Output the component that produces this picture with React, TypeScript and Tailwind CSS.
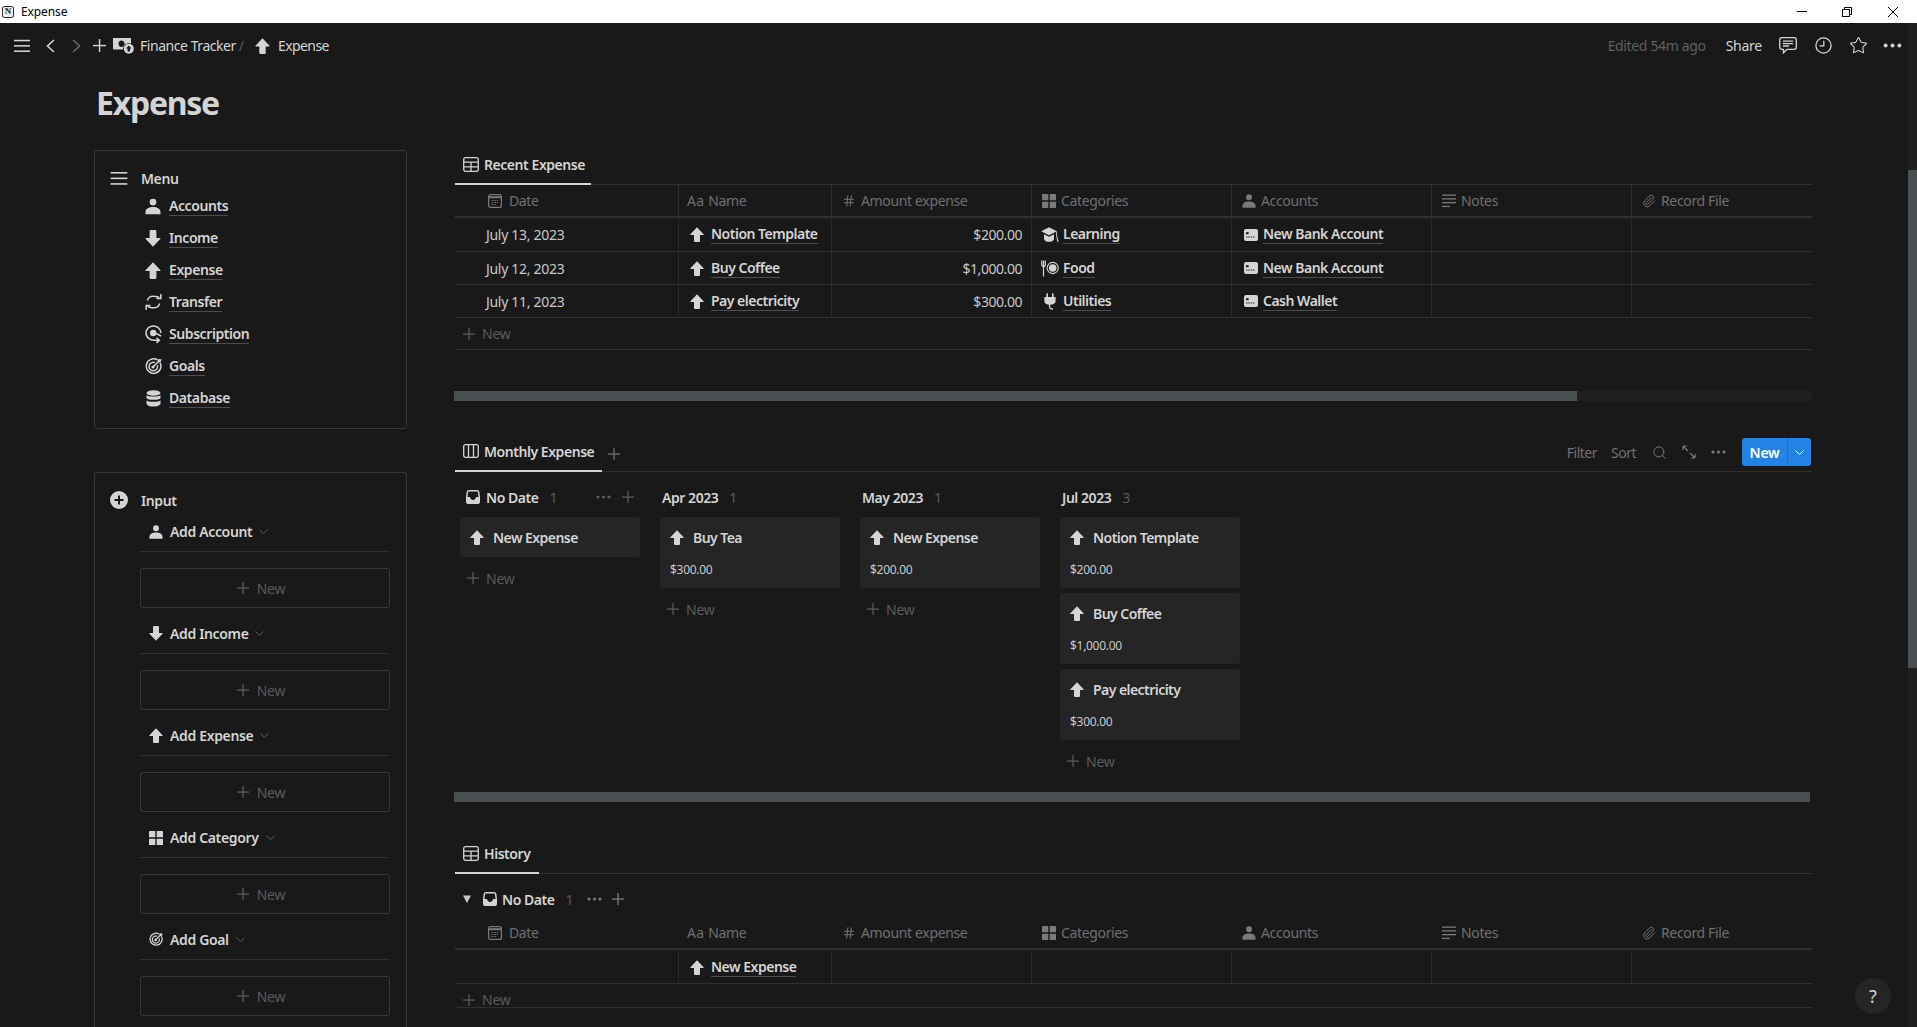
import React from "react";
import { Search, Hash, Paperclip, Star } from "lucide-react";

type P = { className?: string };

const Up = ({ className = "w-[14px] h-[15px] text-[#d4d4d4]" }: P) => (
  <svg viewBox="0 0 14 15" className={className} fill="currentColor"><path d="M7 0.3 L13.6 7.2 Q14 7.9 13.2 8 L10 8 L10 14 Q10 15 9 15 L5 15 Q4 15 4 14 L4 8 L0.8 8 Q0 7.9 0.4 7.2 Z" /></svg>
);
const Down = ({ className = "w-[14px] h-[15px] text-[#d4d4d4]" }: P) => (
  <svg viewBox="0 0 14 15" className={className} fill="currentColor"><path d="M7 14.7 L13.6 7.8 Q14 7.1 13.2 7 L10 7 L10 1 Q10 0 9 0 L5 0 Q4 0 4 1 L4 7 L0.8 7 Q0 7.1 0.4 7.8 Z" /></svg>
);
const Burger = ({ className = "w-[18px] h-[14px] text-[#d4d4d4]" }: P) => (
  <svg viewBox="0 0 18 14" className={className} fill="currentColor"><rect y="0" width="18" height="1.7" /><rect y="6" width="18" height="1.7" /><rect y="12" width="18" height="1.7" /></svg>
);
const Person = ({ className = "w-[16px] h-[16px] text-[#d4d4d4]" }: P) => (
  <svg viewBox="0 0 16 16" className={className} fill="currentColor"><circle cx="8" cy="3.6" r="3.4" /><path d="M0.5 15.8 V13.5 C0.5 10.3 4 8.6 8 8.6 C12 8.6 15.5 10.3 15.5 13.5 V15.8 Z" /></svg>
);
const Transfer = ({ className = "w-[17px] h-[16px] text-[#d4d4d4]" }: P) => (
  <svg viewBox="0 0 17 16" className={className} fill="none" stroke="currentColor" strokeWidth="1.6"><path d="M2.5 6.5 C3 3.5 6 2 8.5 2.2 C10.5 2.3 12 2.8 14 3.2" /><path d="M15.8 0.2 L15.8 4.4 L11.6 4.4" /><path d="M14.5 9.5 C14 12.5 11 14 8.5 13.8 C6.5 13.7 5 13.2 3 12.8" /><path d="M1.2 15.8 L1.2 11.6 L5.4 11.6" /></svg>
);
const Subscription = ({ className = "w-[17px] h-[19px] text-[#d4d4d4]" }: P) => (
  <svg viewBox="0 0 17 19" className={className} fill="none" stroke="currentColor" strokeWidth="1.6"><path d="M9 15.2 C4.6 15.2 1 12 1 8 C1 4 4.3 1 8.4 1 C12.4 1 15.8 4 15.8 8" /><path d="M9 15.2 L14 15.2 M11.5 12.8 L14.2 15.2 L11.5 17.8" /><circle cx="8.2" cy="8" r="3.2" fill="currentColor" stroke="none" /><path d="M11 8.4 L16 11" /></svg>
);
const Target = ({ className = "w-[17px] h-[17px] text-[#d4d4d4]" }: P) => (
  <svg viewBox="0 0 17 17" className={className} fill="none" stroke="currentColor" strokeWidth="1.5"><path d="M12.6 2 A7.3 7.3 0 1 0 15 4.6" /><path d="M10 4.6 A4.3 4.3 0 1 0 12.4 7.2" /><circle cx="8" cy="9" r="1.6" fill="currentColor" stroke="none" /><path d="M8 9 L14 3" /><path d="M12.8 1.6 L12.8 4.2 L15.6 4.2 L16.6 1.6 L14.6 1 Z" fill="currentColor" stroke="none" /></svg>
);
const Database = ({ className = "w-[15px] h-[17px] text-[#d4d4d4]" }: P) => (
  <svg viewBox="0 0 15 17" className={className} fill="currentColor"><ellipse cx="7.5" cy="3" rx="7" ry="2.8" /><path d="M0.5 5 C2 7 13 7 14.5 5 V8.2 C13 10.4 2 10.4 0.5 8.2 Z" /><path d="M0.5 10.2 C2 12.2 13 12.2 14.5 10.2 V14 C13 17.4 2 17.4 0.5 14 Z" /></svg>
);
const TableIcon = ({ className = "w-[16px] h-[15px] text-[#d4d4d4]" }: P) => (
  <svg viewBox="0 0 16 15" className={className} fill="none" stroke="currentColor" strokeWidth="1.3"><rect x="0.7" y="0.7" width="14.6" height="13.6" rx="2" /><path d="M0.7 5.2 H15.3 M0.7 9.8 H15.3 M8 5.2 V14.3" /></svg>
);
const BoardIcon = ({ className = "w-[16px] h-[14px] text-[#d4d4d4]" }: P) => (
  <svg viewBox="0 0 16 14" className={className} fill="none" stroke="currentColor" strokeWidth="1.3"><rect x="0.7" y="0.7" width="14.6" height="12.6" rx="1.8" /><path d="M5.5 0.7 V13.3 M10.5 0.7 V13.3" /></svg>
);
const Cal = ({ className = "w-[14px] h-[14px] text-[#7a7a7a]" }: P) => (
  <svg viewBox="0 0 14 14" className={className} fill="none" stroke="currentColor"><rect x="0.6" y="0.6" width="12.8" height="12.8" rx="2" strokeWidth="1.2" /><path d="M1 3.2 H13" strokeWidth="2" /><path d="M3.5 6.5 H10.5 M3.5 8.5 H10.5 M3.5 10.5 H8" strokeWidth="1.1" strokeDasharray="1 0.8" /></svg>
);
const Grid = ({ className = "w-[14px] h-[14px] text-[#7a7a7a]" }: P) => (
  <svg viewBox="0 0 14 14" className={className} fill="currentColor"><rect width="6.3" height="6.3" rx="0.6" /><rect x="7.7" width="6.3" height="6.3" rx="0.6" /><rect y="7.7" width="6.3" height="6.3" rx="0.6" /><rect x="7.7" y="7.7" width="6.3" height="6.3" rx="0.6" /></svg>
);
const Notes = ({ className = "w-[14px] h-[14px] text-[#7a7a7a]" }: P) => (
  <svg viewBox="0 0 14 14" className={className} fill="currentColor"><rect y="0.5" width="14" height="1.3" /><rect y="4.2" width="14" height="1.3" /><rect y="8" width="14" height="1.3" /><rect y="11.8" width="8" height="1.3" /></svg>
);
const Grad = ({ className = "w-[18px] h-[16px] text-[#d4d4d4]" }: P) => (
  <svg viewBox="0 0 18 16" className={className} fill="currentColor"><path d="M8 0.3 L16 4.3 L8 8.3 L0.2 4.3 Z" /><path d="M3 7.2 L8 9.8 L13 7.2 V12 C12 15.8 4 15.8 3 12 Z" /><path d="M15.2 5 L16.1 4.6 V9 L17.6 14.5 L16.4 15 L15.2 9 Z" /></svg>
);
const Food = ({ className = "w-[18px] h-[17px] text-[#d4d4d4]" }: P) => (
  <svg viewBox="0 0 18 17" className={className} fill="none" stroke="currentColor"><path d="M0.7 0.5 V4.5 C0.7 6 2 6.5 2.5 6.5 C3 6.5 4.3 6 4.3 4.5 V0.5 M2.5 0.5 V16.5" strokeWidth="1.2" /><circle cx="11.7" cy="8" r="5.6" strokeWidth="1.1" /><circle cx="11.7" cy="8" r="3.8" fill="currentColor" stroke="none" /></svg>
);
const Plug = ({ className = "w-[12px] h-[17px] text-[#d4d4d4]" }: P) => (
  <svg viewBox="0 0 12 17" className={className}><path fill="currentColor" d="M2.4 0.3 H4 V4 H8 V0.3 H9.6 V4 H11.6 V8 C11.6 10.5 9.6 11.8 6 11.8 C2.4 11.8 0.4 10.5 0.4 8 V4 H2.4 Z" /><path fill="none" stroke="currentColor" strokeWidth="1.3" d="M5.5 11 V13.5 C5.5 15.5 7 16 9 16" /></svg>
);
const Card = ({ className = "w-[14px] h-[12px] text-[#d4d4d4]" }: P) => (
  <svg viewBox="0 0 14 12" className={className}><rect width="14" height="12" rx="2" fill="currentColor" /><rect x="2" y="3.2" width="2.6" height="2" fill="#191919" /><path d="M2 8 H11" stroke="#191919" strokeWidth="1.2" strokeDasharray="1.4 1" /></svg>
);
const Inbox = ({ className = "w-[14px] h-[14px] text-[#d4d4d4]" }: P) => (
  <svg viewBox="0 0 14 14" className={className}><path fill="currentColor" d="M3 0 H11 Q13 0 13.4 2 L14 7 V12 Q14 14 12 14 H2 Q0 14 0 12 V7 L0.6 2 Q1 0 3 0 Z M3 1.4 Q2.2 1.4 2 2.2 L1.5 7 H4 C4.4 9.2 5.6 10 7 10 C8.4 10 9.6 9.2 10 7 H12.5 L12 2.2 Q11.8 1.4 11 1.4 Z" /></svg>
);
const Dots = ({ className = "w-[15px] h-[4px] text-[#7a7a7a]" }: P) => (
  <svg viewBox="0 0 15 4" className={className} fill="currentColor"><circle cx="2" cy="2" r="1.6" /><circle cx="7.5" cy="2" r="1.6" /><circle cx="13" cy="2" r="1.6" /></svg>
);
const Plus = ({ className = "w-[12px] h-[12px] text-[#5a5a5a]" }: P) => (
  <svg viewBox="0 0 12 12" className={className} fill="currentColor"><rect x="5.4" width="1.3" height="12" /><rect y="5.4" width="12" height="1.3" /></svg>
);
const Chev = ({ className = "w-[9px] h-[5px] text-[#5a5a5a]" }: P) => (
  <svg viewBox="0 0 9 5" className={className} fill="none" stroke="currentColor" strokeWidth="1"><path d="M0.5 0.5 L4.5 4.5 L8.5 0.5" /></svg>
);
const Expand = ({ className = "w-[14px] h-[14px] text-[#7a7a7a]" }: P) => (
  <svg viewBox="0 0 14 14" className={className} fill="none" stroke="currentColor" strokeWidth="1.2"><path d="M1 1 L6 6 M1 1 H5 M1 1 V5" /><path d="M13 13 L8 8 M13 13 H9 M13 13 V9" /></svg>
);
const Money = () => (
  <svg viewBox="0 0 21 16" className="w-[21px] h-[16px] text-[#d4d4d4]">
    <path fill="currentColor" fillRule="evenodd" d="M0 0 H18 V5.5 A6 6 0 0 0 10 11.5 H0 Z M8.5 2.5 A3.2 3.2 0 0 0 5.5 5.8 A3.2 3.2 0 0 0 8.5 9 A3 3 0 0 0 11 7.5 A3.2 3.2 0 0 0 8.5 2.5 Z" />
    <circle cx="15.8" cy="10.8" r="5" fill="currentColor" />
    <path fill="#191919" d="M15.8 7.5 L18.6 10.5 H17 V13.5 H14.6 V10.5 H13 Z" />
  </svg>
);

const font = "font-['Noto_Sans','Open_Sans',sans-serif]";

const Linked = ({ children, tight = "tracking-[-0.5px]" }: { children: React.ReactNode; tight?: string }) => (
  <span className={`border-b border-[#4d4d4d] font-semibold text-[#d4d4d4] text-[14px] leading-[18px] ${tight}`}>{children}</span>
);

const menuArrow = "w-[16px] h-[17px] text-[#d4d4d4]";

const items: [React.ReactNode, string][] = [
  [<Person className={menuArrow} />, "Accounts"],
  [<Down className={menuArrow} />, "Income"],
  [<Up className={menuArrow} />, "Expense"],
  [<Transfer />, "Transfer"],
  [<Subscription />, "Subscription"],
  [<Target />, "Goals"],
  [<Database />, "Database"],
];

const MenuBox = () => (
  <div className="border border-[#373737] rounded-[3px] pt-[15px] pb-[14px] pl-[15px]">
    <div className="flex items-center h-[24px]">
      <Burger className="w-[18px] h-[13px] text-[#d4d4d4]" />
      <span className="ml-[13px] text-[14px] font-semibold text-[#d4d4d4] tracking-[-0.4px]">Menu</span>
    </div>
    {items.map(([icon, label]) => (
      <div key={label} className="flex items-center h-[32px] pl-[34px]">
        <span className="w-[18px] flex justify-center">{icon}</span>
        <span className="ml-[7px] flex"><Linked tight="tracking-[-0.42px]">{label}</Linked></span>
      </div>
    ))}
  </div>
);

const addRows: [React.ReactNode, string][] = [
  [<Person className="w-[14px] h-[14px] text-[#d4d4d4]" />, "Add Account"],
  [<Down />, "Add Income"],
  [<Up />, "Add Expense"],
  [<Grid className="w-[14px] h-[14px] text-[#d4d4d4]" />, "Add Category"],
  [<Target className="w-[15px] h-[15px] text-[#d4d4d4]" />, "Add Goal"],
];

const InputBox = () => (
  <div className="border-x border-t border-[#373737] rounded-t-[3px] pt-[15px] pl-[15px] h-[600px] mt-[43px]">
    <div className="flex items-center h-[24px]">
      <svg viewBox="0 0 18 18" className="w-[18px] h-[18px] text-[#d4d4d4]">
        <circle cx="9" cy="9" r="9" fill="currentColor" />
        <path d="M9 4.5 V13.5 M4.5 9 H13.5" stroke="#191919" strokeWidth="2" />
      </svg>
      <span className="ml-[13px] text-[14px] font-semibold text-[#d4d4d4] tracking-[-0.4px]">Input</span>
    </div>
    <div className="ml-[30px] w-[250px] flex flex-col">
      {addRows.map(([icon, label]) => (
        <div key={label} className="h-[102px]">
          <div className="h-[40px] border-b border-[#2f2f2f] flex items-center pl-[9px]">
            <span className="w-[14px] flex justify-center">{icon}</span>
            <span className="ml-[7px] text-[14px] font-semibold text-[#d4d4d4] tracking-[-0.35px]">{label}</span>
            <Chev className="ml-[7px] w-[9px] h-[5px] text-[#5a5a5a]" />
          </div>
          <div className="mt-[16px] h-[40px] border border-[#373737] rounded-[3px] flex items-center justify-center pr-[8px]">
            <Plus />
            <span className="ml-[8px] text-[14px] text-[#5a5a5a] tracking-[-0.2px]">New</span>
          </div>
        </div>
      ))}
    </div>
  </div>
);

const Tab = ({ icon, label, w, gap = "ml-[5px]" }: { icon: React.ReactNode; label: string; w: string; gap?: string }) => (
  <div className={`${w} h-[35px] -mb-px border-b-2 border-[#d4d4d4] flex items-center pl-[8px] pb-[5px]`}>
    {icon}
    <span className={`${gap} text-[14px] font-semibold text-[#d4d4d4] tracking-[-0.45px]`}>{label}</span>
  </div>
);

const cols = "grid grid-cols-[224px_153px_200px_200px_200px_200px_180px]";
const colLine = "border-r border-[#2a2a2a]";

const HeadCell = ({ icon, label, pl, gap, line = true }: { icon: React.ReactNode; label: string; pl: string; gap: string; line?: boolean }) => (
  <div className={`flex items-center ${pl} ${line ? "border-r border-[#2f2f2f]" : ""}`}>
    {icon}
    <span className={`${gap} text-[14px] text-[#6f6f6f] tracking-[-0.35px]`}>{label}</span>
  </div>
);

const Header = ({ line = true, h = "h-[33px]" }: { line?: boolean; h?: string }) => (
  <div className={`${cols} ${h} border-b-2 border-[#2f2f2f]`}>
    <HeadCell icon={<Cal />} label="Date" pl="pl-[33px]" gap="ml-[7px]" line={line} />
    <HeadCell icon={<span className="text-[14px] text-[#6f6f6f] tracking-[0.2px]">Aa</span>} label="Name" pl="pl-[8px]" gap="ml-[4px]" line={line} />
    <HeadCell icon={<Hash className="w-[14px] h-[14px] text-[#7a7a7a]" strokeWidth={1.6} />} label="Amount expense" pl="pl-[10px]" gap="ml-[5px]" line={line} />
    <HeadCell icon={<Grid />} label="Categories" pl="pl-[10px]" gap="ml-[5px]" line={line} />
    <HeadCell icon={<Person className="w-[14px] h-[14px] text-[#7a7a7a]" />} label="Accounts" pl="pl-[10px]" gap="ml-[5px]" line={line} />
    <HeadCell icon={<Notes />} label="Notes" pl="pl-[10px]" gap="ml-[5px]" line={line} />
    <HeadCell icon={<Paperclip className="w-[14px] h-[14px] text-[#7a7a7a]" strokeWidth={1.6} />} label="Record File" pl="pl-[10px]" gap="ml-[5px]" line={false} />
  </div>
);

const Row = ({ date, name, amount, catIcon, cat, account, h }: { date?: string; name: string; amount?: string; catIcon?: React.ReactNode; cat?: string; account?: string; h: string }) => (
  <div className={`${cols} ${h} border-b border-[#2f2f2f]`}>
    <div className={`${colLine} flex items-center pl-[31px] text-[14px] text-[#c8c8c8] tracking-[-0.3px]`}>{date}</div>
    <div className={`${colLine} flex items-center pl-[11px]`}><Up /><span className="ml-[7px] flex"><Linked>{name}</Linked></span></div>
    <div className={`${colLine} flex items-center justify-end pr-[9px] text-[14px] text-[#c8c8c8] tracking-[-0.45px]`}>{amount}</div>
    <div className={`${colLine} flex items-center pl-[9px]`}>
      {cat && <span className="w-[18px] flex justify-center">{catIcon}</span>}
      {cat && <span className="ml-[4px] flex"><Linked>{cat}</Linked></span>}
    </div>
    <div className={`${colLine} flex items-center pl-[12px]`}>
      {account && <Card />}
      {account && <span className="ml-[5px] flex"><Linked>{account}</Linked></span>}
    </div>
    <div className={colLine} />
    <div />
  </div>
);

const NewRow = ({ className = "" }: P) => (
  <div className={`flex items-center ${className}`}>
    <Plus />
    <span className="ml-[7px] text-[14px] text-[#5a5a5a] tracking-[-0.2px]">New</span>
  </div>
);

const BoardCard = ({ name, price }: { name: string; price?: string }) => (
  <div className={`w-[180px] ${price ? "h-[71px]" : "h-[40px]"} bg-[#252525] rounded-[3px] pl-[10px]`}>
    <div className="flex items-center h-[41px] -mb-[1px]">
      <Up />
      <span className="ml-[9px] text-[14px] font-semibold text-[#d4d4d4] tracking-[-0.55px]">{name}</span>
    </div>
    {price && <div className="h-[22px] mt-[2px] flex items-center text-[12px] text-[#c8c8c8] tracking-[-0.3px]">{price}</div>}
  </div>
);

const ColHead = ({ children, count, trailing }: { children: React.ReactNode; count: string; trailing?: React.ReactNode }) => (
  <div className="h-[26px] mt-[12px] mb-[7px] flex items-center text-[14px] font-semibold text-[#d4d4d4] tracking-[-0.45px]">
    {children}
    <span className="ml-[11px] text-[#5a5a5a] font-normal">{count}</span>
    {trailing}
  </div>
);

const BoardCol = ({ head, cards, indent = "pl-[2px]" }: { head: React.ReactNode; cards: { name: string; price?: string }[]; indent?: string }) => (
  <div className="w-[180px]">
    <div className={indent}>{head}</div>
    <div className="flex flex-col gap-[5px]">
      {cards.map((c) => <BoardCard key={c.name} {...c} />)}
    </div>
    <NewRow className="h-[42px] pl-[7px]" />
  </div>
);

const App = () => (
  <div className={`w-[1917px] h-[1027px] overflow-hidden bg-[#191919] flex flex-col ${font}`}>
    <div className="h-[23px] bg-white flex items-center shrink-0">
      <div className="ml-[2px] w-[12px] h-[12px] border border-[#333] rounded-[2px] flex items-center justify-center text-[9px] font-bold leading-none text-[#222] bg-[#eee] font-['Liberation_Serif',serif]">N</div>
      <span className="ml-[7px] text-[12px] text-black tracking-[-0.1px]">Expense</span>
      <div className="ml-auto flex items-center">
        <div className="w-[10px] h-px bg-black" />
        <svg viewBox="0 0 10 10" className="ml-[35px] w-[10px] h-[10px]" fill="none" stroke="black"><rect x="0.5" y="2.5" width="7" height="7" /><path d="M2.5 2.5 V0.5 H9.5 V7.5 H7.5" /></svg>
        <svg viewBox="0 0 10 10" className="ml-[36px] mr-[19px] w-[10px] h-[10px]" fill="none" stroke="black"><path d="M0 0 L10 10 M10 0 L0 10" /></svg>
      </div>
    </div>
    <div className="flex-1 flex min-h-0">
      <div className="flex-1 min-w-0 flex flex-col">
        <div className="h-[45px] shrink-0 flex items-center">
          <Burger className="ml-[14px] w-[16px] h-[14px] text-[#d4d4d4]" />
          <svg viewBox="0 0 9 14" className="ml-[16px] w-[9px] h-[14px] text-[#d4d4d4]" fill="none" stroke="currentColor" strokeWidth="1.6"><path d="M8 1 L1.5 7 L8 13" /></svg>
          <svg viewBox="0 0 9 14" className="ml-[17px] w-[9px] h-[14px] text-[#6a6a6a]" fill="none" stroke="currentColor" strokeWidth="1.6"><path d="M1 1 L7.5 7 L1 13" /></svg>
          <Plus className="ml-[12px] w-[13px] h-[13px] text-[#d4d4d4]" />
          <span className="ml-[7px] flex"><Money /></span>
          <span className="ml-[6px] text-[14px] text-[#d4d4d4] tracking-[-0.45px]">Finance Tracker</span>
          <span className="ml-[3px] text-[14px] text-[#5a5a5a]">/</span>
          <Up className="ml-[11px] w-[15px] h-[16px] text-[#d4d4d4]" />
          <span className="ml-[8px] text-[14px] text-[#d4d4d4] tracking-[-0.6px]">Expense</span>
          <div className="ml-auto flex items-center">
            <span className="text-[14px] text-[#5f5f5f] tracking-[-0.35px]">Edited 54m ago</span>
            <span className="ml-[20px] text-[14px] text-[#d4d4d4] tracking-[-0.25px]">Share</span>
            <svg viewBox="0 0 18 17" className="ml-[17px] w-[18px] h-[17px] text-[#d4d4d4]" fill="none" stroke="currentColor" strokeWidth="1.3"><path d="M3 0.7 H15 Q17.3 0.7 17.3 3 V10 Q17.3 12.3 15 12.3 H8 L4.5 15.8 V12.3 H3 Q0.7 12.3 0.7 10 V3 Q0.7 0.7 3 0.7 Z" /><path d="M4 4.2 H14 M4 6.6 H14 M4 9 H10" /></svg>
            <svg viewBox="0 0 17 17" className="ml-[18px] w-[17px] h-[17px] text-[#d4d4d4]" fill="none" stroke="currentColor" strokeWidth="1.3"><circle cx="8.5" cy="8.5" r="7.6" /><path d="M8.8 3.8 V8.8 H4.5" /></svg>
            <Star className="ml-[17px] w-[19px] h-[19px] text-[#d4d4d4]" strokeWidth={1.4} />
            <Dots className="ml-[15px] mr-[6px] w-[19px] h-[5px] text-[#d4d4d4]" />
          </div>
        </div>
        <div className="pl-[96px] mt-[15px] h-[40px] flex items-center text-[32px] font-bold leading-none text-[#d4d4d4] tracking-[-1.25px] shrink-0">Expense</div>
        <div className="flex mt-[27px] ml-[94px] flex-1 min-h-0">
          <div className="w-[313px] shrink-0">
            <MenuBox />
            <InputBox />
          </div>
          <div className="ml-[48px] w-[1357px] shrink-0">
            <div className="h-[35px] border-b border-[#2f2f2f] flex">
              <Tab icon={<TableIcon />} label="Recent Expense" w="w-[136px]" />
            </div>
            <Header />
            <Row h="h-[34px]" date="July 13, 2023" name="Notion Template" amount="$200.00" catIcon={<Grad />} cat="Learning" account="New Bank Account" />
            <Row h="h-[33px]" date="July 12, 2023" name="Buy Coffee" amount="$1,000.00" catIcon={<Food />} cat="Food" account="New Bank Account" />
            <Row h="h-[33px]" date="July 11, 2023" name="Pay electricity" amount="$300.00" catIcon={<Plug />} cat="Utilities" account="Cash Wallet" />
            <NewRow className="h-[32px] pl-[8px] border-b border-[#2f2f2f]" />
            <div className="mt-[41px] -ml-px h-[10px] bg-[#202020]">
              <div className="h-[10px] w-[1123px] bg-[#4a4f52]" />
            </div>

            <div className="mt-[36px] h-[35px] border-b border-[#2f2f2f] flex items-center">
              <Tab icon={<BoardIcon />} label="Monthly Expense" w="w-[147px]" />
              <Plus className="ml-[6px] w-[12px] h-[12px] text-[#6f6f6f]" />
              <div className="ml-auto mr-px flex items-center pb-[4px]">
                <span className="text-[14px] text-[#6f6f6f] tracking-[-0.5px]">Filter</span>
                <span className="ml-[14px] text-[14px] text-[#6f6f6f] tracking-[-0.5px]">Sort</span>
                <Search className="ml-[16px] w-[15px] h-[15px] text-[#7a7a7a]" strokeWidth={1.5} />
                <Expand className="ml-[15px] w-[14px] h-[14px] text-[#7a7a7a]" />
                <Dots className="ml-[15px] w-[15px] h-[4px] text-[#7a7a7a]" />
                <div className="ml-[16px] w-[69px] h-[28px] bg-[#2383e2] rounded-[3px] flex items-center">
                  <span className="w-[45px] text-center text-[14px] font-semibold text-white tracking-[-0.25px]">New</span>
                  <div className="h-full flex-1 border-l border-[#1f6fc0] flex items-center justify-center">
                    <Chev className="w-[9px] h-[5px] text-white" />
                  </div>
                </div>
              </div>
            </div>
            <div className="h-[320px] pl-[5px] flex gap-[20px]">
              <BoardCol
                indent="pl-[6px]"
                head={
                  <ColHead
                    count="1"
                    trailing={
                      <>
                        <Dots className="ml-auto w-[15px] h-[4px] text-[#5a5a5a]" />
                        <Plus className="ml-[11px] mr-[6px] w-[12px] h-[12px] text-[#5a5a5a]" />
                      </>
                    }
                  >
                    <Inbox />
                    <span className="ml-[6px]">No Date</span>
                  </ColHead>
                }
                cards={[{ name: "New Expense" }]}
              />
              <BoardCol head={<ColHead count="1">Apr 2023</ColHead>} cards={[{ name: "Buy Tea", price: "$300.00" }]} />
              <BoardCol head={<ColHead count="1">May 2023</ColHead>} cards={[{ name: "New Expense", price: "$200.00" }]} />
              <BoardCol
                head={<ColHead count="3">Jul 2023</ColHead>}
                cards={[
                  { name: "Notion Template", price: "$200.00" },
                  { name: "Buy Coffee", price: "$1,000.00" },
                  { name: "Pay electricity", price: "$300.00" },
                ]}
              />
            </div>
            <div className="h-[10px] -ml-px w-[1356px] bg-[#4a4f52]" />

            <div className="mt-[37px] h-[35px] border-b border-[#2f2f2f] flex">
              <Tab icon={<TableIcon />} label="History" w="w-[84px]" />
            </div>
            <div className="mt-[14px] mb-[7px] h-[22px] flex items-center pl-[8px] text-[14px] font-semibold text-[#d4d4d4] tracking-[-0.45px] whitespace-nowrap">
              <svg viewBox="0 0 8 8" className="w-[8px] h-[8px] text-[#c8c8c8]" fill="currentColor"><path d="M0 0.5 H8 L4 8 Z" /></svg>
              <Inbox className="ml-[12px] w-[14px] h-[14px] text-[#d4d4d4]" />
              <span className="ml-[5px]">No Date</span>
              <span className="ml-[11px] text-[#5a5a5a] font-normal">1</span>
              <Dots className="ml-[14px] w-[15px] h-[4px] text-[#7a7a7a]" />
              <Plus className="ml-[10px] w-[12px] h-[12px] text-[#7a7a7a]" />
            </div>
            <Header line={false} />
            <Row h="h-[34px] pt-[2px]" name="New Expense" />
            <NewRow className="h-[24px] pl-[8px] pt-[8px] border-b border-[#2f2f2f]" />
          </div>
        </div>
      </div>
      <div className="w-[9px] bg-[#202020] shrink-0 pt-[147px]">
        <div className="h-[498px] bg-[#4a4f52]" />
      </div>
    </div>
    <div className="absolute left-[1855px] top-[978px] w-[36px] h-[36px] rounded-full bg-[#252525] flex items-center justify-center text-[18px] text-[#d4d4d4]">?</div>
  </div>
);

export default App;
